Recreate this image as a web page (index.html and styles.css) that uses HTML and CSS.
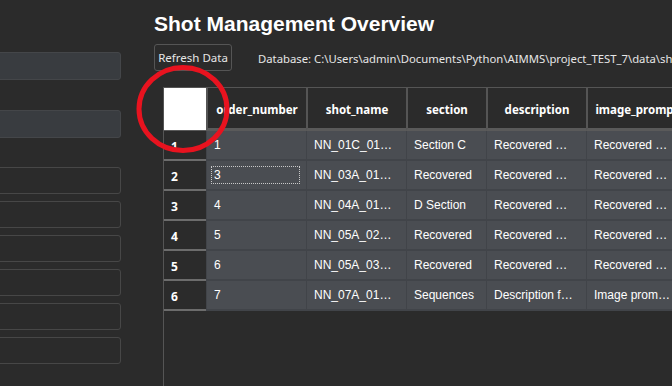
FILE: index.html
```html
<!DOCTYPE html>
<html lang="en">
<head>
    <meta charset="UTF-8">
    <meta name="viewport" content="width=device-width, initial-scale=1.0">
    <title>Shot Management Overview</title>
    <link rel="stylesheet" href="styles.css">
</head>
<body>
    <div class="sidebar">
        <div class="field filled"></div>
        <div class="field filled second"></div>
        <div class="field-list">
            <div class="field"></div>
            <div class="field"></div>
            <div class="field"></div>
            <div class="field"></div>
            <div class="field"></div>
            <div class="field"></div>
        </div>
    </div>

    <div class="main">
        <h1>Shot Management Overview</h1>
        <div class="toolbar">
            <button class="btn">Refresh Data</button>
            <span class="db-path">Database: C:\Users\admin\Documents\Python\AIMMS\project_TEST_7\data\shots.db</span>
        </div>

        <div class="table">
            <div class="grid">
                <div class="corner"></div>
                <div class="th">order_number</div>
                <div class="th">shot_name</div>
                <div class="th">section</div>
                <div class="th">description</div>
                <div class="th">image_prompt</div>

                <div class="rh">1</div>
                <div class="td">1</div>
                <div class="td">NN_01C_01…</div>
                <div class="td">Section C</div>
                <div class="td">Recovered …</div>
                <div class="td">Recovered …</div>

                <div class="rh">2</div>
                <div class="td"><span class="focus">3</span></div>
                <div class="td">NN_03A_01…</div>
                <div class="td">Recovered</div>
                <div class="td">Recovered …</div>
                <div class="td">Recovered …</div>

                <div class="rh">3</div>
                <div class="td">4</div>
                <div class="td">NN_04A_01…</div>
                <div class="td">D Section</div>
                <div class="td">Recovered …</div>
                <div class="td">Recovered …</div>

                <div class="rh">4</div>
                <div class="td">5</div>
                <div class="td">NN_05A_02…</div>
                <div class="td">Recovered</div>
                <div class="td">Recovered …</div>
                <div class="td">Recovered …</div>

                <div class="rh">5</div>
                <div class="td">6</div>
                <div class="td">NN_05A_03…</div>
                <div class="td">Recovered</div>
                <div class="td">Recovered …</div>
                <div class="td">Recovered …</div>

                <div class="rh">6</div>
                <div class="td">7</div>
                <div class="td">NN_07A_01…</div>
                <div class="td">Sequences</div>
                <div class="td">Description f…</div>
                <div class="td">Image prom…</div>
            </div>
        </div>
    </div>

    <!-- red annotation ring drawn over the screenshot -->
    <svg class="mark" width="100" height="96" viewBox="0 0 100 96">
        <ellipse cx="50" cy="47" rx="44" ry="41.5" fill="none" stroke="#e8131f" stroke-width="5"/>
    </svg>
</body>
</html>
```

FILE: styles.css
```css
body {
    margin: 0;
    height: 386px;
    overflow: hidden;
    display: flex;
    background: #2b2b2b;
    color: #ffffff;
    font-family: 'Liberation Sans', Arial, sans-serif;
}

.sidebar {
    width: 154px;
    flex-shrink: 0;
    padding: 52px 33px 0 0;
    box-sizing: border-box;
}

.field {
    height: 27px;
    margin-left: -10px;
    border: 1px solid #474747;
    border-radius: 3px;
    box-sizing: border-box;
}

.filled {
    height: 28px;
    background: #393c40;
    border-color: #444649;
}

.filled.second {
    margin-top: 30px;
}

.field-list {
    display: flex;
    flex-direction: column;
    gap: 7px;
    margin-top: 29px;
}

.main {
    flex: 1;
    min-width: 0;
    padding-top: 12px;
    display: flex;
    flex-direction: column;
    overflow: hidden;
}

h1 {
    margin: 0;
    font-size: 21px;
    line-height: 24px;
    font-weight: bold;
    white-space: nowrap;
}

.toolbar {
    display: flex;
    align-items: center;
    margin-top: 8px;
    white-space: nowrap;
    overflow: hidden;
}

.btn {
    flex-shrink: 0;
    height: 27px;
    width: 78px;
    padding: 0;
    background: #2b2b2b;
    color: #e6e6e6;
    border: 1px solid #555555;
    border-radius: 3px;
    font-family: 'Noto Sans', sans-serif;
    font-size: 11.5px;
}

.db-path {
    margin-left: 26px;
    padding-top: 1px;
    font-family: 'Noto Sans', sans-serif;
    font-size: 11.3px;
    color: #e6e6e6;
}

.table {
    flex: 1;
    margin: 16px 0 0 9px;
    border-top: 1px solid #555555;
    border-left: 1px solid #555555;
    overflow: hidden;
}

.grid {
    display: grid;
    grid-template-columns: 42px 100px 100px 80px 100px 100px;
    grid-template-rows: 43px repeat(6, 30px);
    width: max-content;
}

.corner {
    background: #ffffff;
    border-bottom: 1px solid #5a5a5a;
}

.th {
    display: flex;
    align-items: center;
    justify-content: center;
    padding-top: 3px;
    border-left: 2px solid #555555;
    border-bottom: 3px solid #5a5a5a;
    font-family: 'Noto Sans', sans-serif;
    font-size: 11.5px;
    font-weight: bold;
}

.rh {
    display: flex;
    align-items: center;
    padding: 3px 0 0 7px;
    border-bottom: 2px solid #6c6c6c;
    font-family: 'Noto Sans', sans-serif;
    font-size: 12px;
    font-weight: bold;
}

.td {
    display: flex;
    align-items: center;
    padding-left: 7px;
    background: #4a4d52;
    border-left: 1px solid #414449;
    border-bottom: 2px solid #414449;
    font-size: 12px;
    white-space: nowrap;
    overflow: hidden;
}

.focus {
    width: 85px;
    margin-left: -2px;
    padding: 1px 0 1px 2px;
    outline: 1px dotted #c8c8c8;
}

.mark {
    position: absolute;
    left: 133px;
    top: 62px;
}
```
